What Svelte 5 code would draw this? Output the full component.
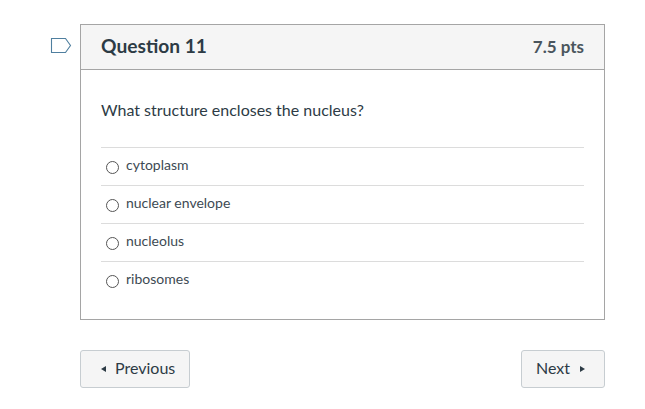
<script>
  const answers = ['cytoplasm', 'nuclear envelope', 'nucleolus', 'ribosomes'];
</script>

<div class="page">
  <div class="question-row">
    <svg class="flag" width="22" height="17" viewBox="0 0 22 17" aria-hidden="true">
      <path d="M1.5 1.5H15.5L20.5 8.5L15.5 15.5H1.5Z" fill="none" stroke="#4f7f9f" stroke-width="1.1" />
    </svg>
    <section class="card">
      <header class="head">
        <h2>Question 11</h2>
        <span class="pts">7.5 pts</span>
      </header>
      <div class="body">
        <p class="prompt">What structure encloses the nucleus?</p>
        <ul>
          {#each answers as a}
            <li><span class="radio"></span><span>{a}</span></li>
          {/each}
        </ul>
      </div>
    </section>
  </div>
  <nav class="nav">
    <button><span class="tri left"></span>Previous</button>
    <button>Next<span class="tri right"></span></button>
  </nav>
</div>

<style>
  :global(body) {
    margin: 0;
    background: #fff;
  }
  .page {
    width: 645px;
    height: 409px;
    box-sizing: border-box;
    padding: 24px 40px 0 80px;
    font-family: Lato, sans-serif;
    color: #2d3b45;
  }
  .question-row {
    position: relative;
  }
  .flag {
    position: absolute;
    left: -30px;
    top: 13px;
  }
  .card {
    border: 1px solid #a5a5a5;
    height: 296px;
    box-sizing: border-box;
  }
  .head {
    height: 45px;
    box-sizing: border-box;
    background: #f5f5f5;
    border-bottom: 1px solid #a5a5a5;
    padding: 0 20px 4px;
    display: flex;
    align-items: center;
    justify-content: space-between;
  }
  h2 {
    margin: 0;
    font-size: 19.2px;
    font-weight: 700;
    font-feature-settings: "liga" 1;
    text-rendering: optimizeLegibility;
  }
  .pts {
    font-size: 17px;
    font-weight: 700;
    color: #4a555d;
    margin-top: 2px;
  }
  .body {
    padding: 29px 20px 0;
  }
  .prompt {
    margin: 0 0 26px;
    font-size: 16px;
    line-height: 22px;
  }
  ul {
    list-style: none;
    margin: 0;
    padding: 0;
  }
  li {
    height: 38px;
    box-sizing: border-box;
    border-top: 1px solid #dcdcdc;
    display: flex;
    align-items: center;
    gap: 7px;
    padding: 0 0 4px 5px;
    font-size: 14px;
    color: #3d4a53;
  }
  .radio {
    width: 13px;
    height: 13px;
    box-sizing: border-box;
    border: 1px solid #555;
    border-radius: 50%;
    margin-top: 5px;
  }
  .nav {
    display: flex;
    justify-content: space-between;
    margin-top: 30px;
  }
  button {
    height: 38px;
    box-sizing: border-box;
    background: #f5f5f5;
    border: 1px solid #c7cdd1;
    border-radius: 3px;
    padding: 0 14px 3px;
    font: 16px Lato, sans-serif;
    color: #2d3b45;
    display: flex;
    align-items: center;
    gap: 9px;
  }
  button:first-child {
    padding: 0 14px 3px 20px;
    width: 110px;
  }
  button:last-child {
    width: 84px;
  }
  .tri {
    width: 0;
    height: 0;
    margin-top: 3px;
    border-top: 3.5px solid transparent;
    border-bottom: 3.5px solid transparent;
  }
  .tri.left {
    border-right: 5px solid #2d3b45;
  }
  .tri.right {
    border-left: 5px solid #2d3b45;
    margin-left: 1px;
  }
</style>
